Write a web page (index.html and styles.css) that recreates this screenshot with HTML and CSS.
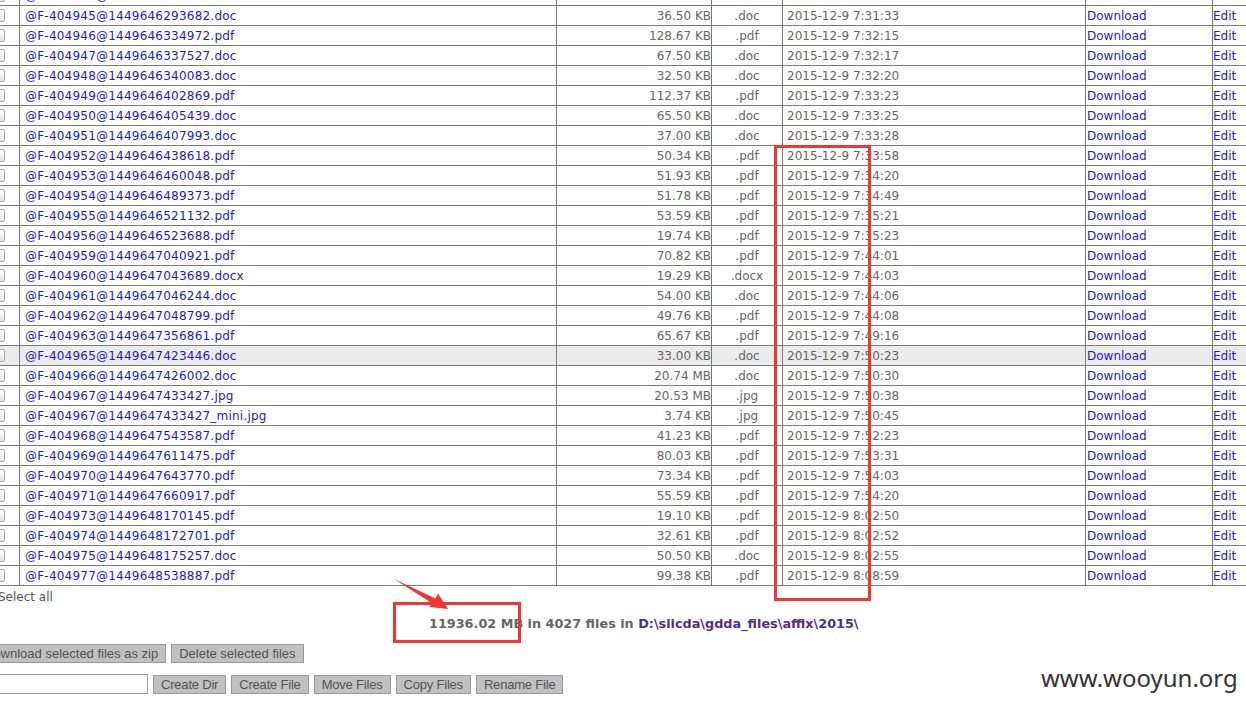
FILE: index.html
```html
<!DOCTYPE html>
<html>
<head>
<meta charset="utf-8">
<title>File list</title>
<link rel="stylesheet" href="styles.css">
</head>
<body>
<div class="page">
  <table class="files">
    <colgroup>
      <col class="c-chk"><col class="c-name"><col class="c-size"><col class="c-ext"><col class="c-date"><col class="c-dl"><col class="c-edit">
    </colgroup>
    <tbody>
      <tr><td class="chk"><span class="box"></span></td><td class="name"><a>@F-404944@1449646290427.doc</a></td><td class="size">35.00 KB</td><td class="ext">.doc</td><td class="date">2015-12-9 7:31:30</td><td class="dl"><a>Download</a></td><td class="edit"><a>Edit</a></td></tr>
      <tr><td class="chk"><span class="box"></span></td><td class="name"><a>@F-404945@1449646293682.doc</a></td><td class="size">36.50 KB</td><td class="ext">.doc</td><td class="date">2015-12-9 7:31:33</td><td class="dl"><a>Download</a></td><td class="edit"><a>Edit</a></td></tr>
      <tr><td class="chk"><span class="box"></span></td><td class="name"><a>@F-404946@1449646334972.pdf</a></td><td class="size">128.67 KB</td><td class="ext">.pdf</td><td class="date">2015-12-9 7:32:15</td><td class="dl"><a>Download</a></td><td class="edit"><a>Edit</a></td></tr>
      <tr><td class="chk"><span class="box"></span></td><td class="name"><a>@F-404947@1449646337527.doc</a></td><td class="size">67.50 KB</td><td class="ext">.doc</td><td class="date">2015-12-9 7:32:17</td><td class="dl"><a>Download</a></td><td class="edit"><a>Edit</a></td></tr>
      <tr><td class="chk"><span class="box"></span></td><td class="name"><a>@F-404948@1449646340083.doc</a></td><td class="size">32.50 KB</td><td class="ext">.doc</td><td class="date">2015-12-9 7:32:20</td><td class="dl"><a>Download</a></td><td class="edit"><a>Edit</a></td></tr>
      <tr><td class="chk"><span class="box"></span></td><td class="name"><a>@F-404949@1449646402869.pdf</a></td><td class="size">112.37 KB</td><td class="ext">.pdf</td><td class="date">2015-12-9 7:33:23</td><td class="dl"><a>Download</a></td><td class="edit"><a>Edit</a></td></tr>
      <tr><td class="chk"><span class="box"></span></td><td class="name"><a>@F-404950@1449646405439.doc</a></td><td class="size">65.50 KB</td><td class="ext">.doc</td><td class="date">2015-12-9 7:33:25</td><td class="dl"><a>Download</a></td><td class="edit"><a>Edit</a></td></tr>
      <tr><td class="chk"><span class="box"></span></td><td class="name"><a>@F-404951@1449646407993.doc</a></td><td class="size">37.00 KB</td><td class="ext">.doc</td><td class="date">2015-12-9 7:33:28</td><td class="dl"><a>Download</a></td><td class="edit"><a>Edit</a></td></tr>
      <tr><td class="chk"><span class="box"></span></td><td class="name"><a>@F-404952@1449646438618.pdf</a></td><td class="size">50.34 KB</td><td class="ext">.pdf</td><td class="date">2015-12-9 7:33:58</td><td class="dl"><a>Download</a></td><td class="edit"><a>Edit</a></td></tr>
      <tr><td class="chk"><span class="box"></span></td><td class="name"><a>@F-404953@1449646460048.pdf</a></td><td class="size">51.93 KB</td><td class="ext">.pdf</td><td class="date">2015-12-9 7:34:20</td><td class="dl"><a>Download</a></td><td class="edit"><a>Edit</a></td></tr>
      <tr><td class="chk"><span class="box"></span></td><td class="name"><a>@F-404954@1449646489373.pdf</a></td><td class="size">51.78 KB</td><td class="ext">.pdf</td><td class="date">2015-12-9 7:34:49</td><td class="dl"><a>Download</a></td><td class="edit"><a>Edit</a></td></tr>
      <tr><td class="chk"><span class="box"></span></td><td class="name"><a>@F-404955@1449646521132.pdf</a></td><td class="size">53.59 KB</td><td class="ext">.pdf</td><td class="date">2015-12-9 7:35:21</td><td class="dl"><a>Download</a></td><td class="edit"><a>Edit</a></td></tr>
      <tr><td class="chk"><span class="box"></span></td><td class="name"><a>@F-404956@1449646523688.pdf</a></td><td class="size">19.74 KB</td><td class="ext">.pdf</td><td class="date">2015-12-9 7:35:23</td><td class="dl"><a>Download</a></td><td class="edit"><a>Edit</a></td></tr>
      <tr><td class="chk"><span class="box"></span></td><td class="name"><a>@F-404959@1449647040921.pdf</a></td><td class="size">70.82 KB</td><td class="ext">.pdf</td><td class="date">2015-12-9 7:44:01</td><td class="dl"><a>Download</a></td><td class="edit"><a>Edit</a></td></tr>
      <tr><td class="chk"><span class="box"></span></td><td class="name"><a>@F-404960@1449647043689.docx</a></td><td class="size">19.29 KB</td><td class="ext">.docx</td><td class="date">2015-12-9 7:44:03</td><td class="dl"><a>Download</a></td><td class="edit"><a>Edit</a></td></tr>
      <tr><td class="chk"><span class="box"></span></td><td class="name"><a>@F-404961@1449647046244.doc</a></td><td class="size">54.00 KB</td><td class="ext">.doc</td><td class="date">2015-12-9 7:44:06</td><td class="dl"><a>Download</a></td><td class="edit"><a>Edit</a></td></tr>
      <tr><td class="chk"><span class="box"></span></td><td class="name"><a>@F-404962@1449647048799.pdf</a></td><td class="size">49.76 KB</td><td class="ext">.pdf</td><td class="date">2015-12-9 7:44:08</td><td class="dl"><a>Download</a></td><td class="edit"><a>Edit</a></td></tr>
      <tr><td class="chk"><span class="box"></span></td><td class="name"><a>@F-404963@1449647356861.pdf</a></td><td class="size">65.67 KB</td><td class="ext">.pdf</td><td class="date">2015-12-9 7:49:16</td><td class="dl"><a>Download</a></td><td class="edit"><a>Edit</a></td></tr>
      <tr class="hover"><td class="chk"><span class="box"></span></td><td class="name"><a>@F-404965@1449647423446.doc</a></td><td class="size">33.00 KB</td><td class="ext">.doc</td><td class="date">2015-12-9 7:50:23</td><td class="dl"><a>Download</a></td><td class="edit"><a>Edit</a></td></tr>
      <tr><td class="chk"><span class="box"></span></td><td class="name"><a>@F-404966@1449647426002.doc</a></td><td class="size">20.74 MB</td><td class="ext">.doc</td><td class="date">2015-12-9 7:50:30</td><td class="dl"><a>Download</a></td><td class="edit"><a>Edit</a></td></tr>
      <tr><td class="chk"><span class="box"></span></td><td class="name"><a>@F-404967@1449647433427.jpg</a></td><td class="size">20.53 MB</td><td class="ext">.jpg</td><td class="date">2015-12-9 7:50:38</td><td class="dl"><a>Download</a></td><td class="edit"><a>Edit</a></td></tr>
      <tr><td class="chk"><span class="box"></span></td><td class="name"><a>@F-404967@1449647433427_mini.jpg</a></td><td class="size">3.74 KB</td><td class="ext">.jpg</td><td class="date">2015-12-9 7:50:45</td><td class="dl"><a>Download</a></td><td class="edit"><a>Edit</a></td></tr>
      <tr><td class="chk"><span class="box"></span></td><td class="name"><a>@F-404968@1449647543587.pdf</a></td><td class="size">41.23 KB</td><td class="ext">.pdf</td><td class="date">2015-12-9 7:52:23</td><td class="dl"><a>Download</a></td><td class="edit"><a>Edit</a></td></tr>
      <tr><td class="chk"><span class="box"></span></td><td class="name"><a>@F-404969@1449647611475.pdf</a></td><td class="size">80.03 KB</td><td class="ext">.pdf</td><td class="date">2015-12-9 7:53:31</td><td class="dl"><a>Download</a></td><td class="edit"><a>Edit</a></td></tr>
      <tr><td class="chk"><span class="box"></span></td><td class="name"><a>@F-404970@1449647643770.pdf</a></td><td class="size">73.34 KB</td><td class="ext">.pdf</td><td class="date">2015-12-9 7:54:03</td><td class="dl"><a>Download</a></td><td class="edit"><a>Edit</a></td></tr>
      <tr><td class="chk"><span class="box"></span></td><td class="name"><a>@F-404971@1449647660917.pdf</a></td><td class="size">55.59 KB</td><td class="ext">.pdf</td><td class="date">2015-12-9 7:54:20</td><td class="dl"><a>Download</a></td><td class="edit"><a>Edit</a></td></tr>
      <tr><td class="chk"><span class="box"></span></td><td class="name"><a>@F-404973@1449648170145.pdf</a></td><td class="size">19.10 KB</td><td class="ext">.pdf</td><td class="date">2015-12-9 8:02:50</td><td class="dl"><a>Download</a></td><td class="edit"><a>Edit</a></td></tr>
      <tr><td class="chk"><span class="box"></span></td><td class="name"><a>@F-404974@1449648172701.pdf</a></td><td class="size">32.61 KB</td><td class="ext">.pdf</td><td class="date">2015-12-9 8:02:52</td><td class="dl"><a>Download</a></td><td class="edit"><a>Edit</a></td></tr>
      <tr><td class="chk"><span class="box"></span></td><td class="name"><a>@F-404975@1449648175257.doc</a></td><td class="size">50.50 KB</td><td class="ext">.doc</td><td class="date">2015-12-9 8:02:55</td><td class="dl"><a>Download</a></td><td class="edit"><a>Edit</a></td></tr>
      <tr><td class="chk"><span class="box"></span></td><td class="name"><a>@F-404977@1449648538887.pdf</a></td><td class="size">99.38 KB</td><td class="ext">.pdf</td><td class="date">2015-12-9 8:08:59</td><td class="dl"><a>Download</a></td><td class="edit"><a>Edit</a></td></tr>
    </tbody>
  </table>

  <div class="select-all">Select all</div>

  <div class="summary"><span class="total">11936.02 MB in 4027 files in </span><a class="path">D:\siicda\gdda_files\affix\2015\</a></div>

  <div class="actions first">
    <button class="btn">Download selected files as zip</button>
    <button class="btn">Delete selected files</button>
  </div>

  <div class="actions second">
    <input class="field" type="text">
    <button class="btn tight">Create Dir</button>
    <button class="btn tight">Create File</button>
    <button class="btn tight">Move Files</button>
    <button class="btn tight">Copy Files</button>
    <button class="btn tight">Rename File</button>
  </div>
</div>

<svg class="marks" width="1246" height="708" viewBox="0 0 1246 708">
  <rect x="775.5" y="146.5" width="94" height="453" fill="none" stroke="#f03535" stroke-width="3"/>
  <rect x="394.5" y="603.5" width="125" height="38" fill="none" stroke="#f03535" stroke-width="3"/>
  <polygon points="394,579 435.5,598.5 438,593.5 448,609 429,607 432.5,603.5" fill="#f03535"/>
</svg>

<div class="watermark">www.wooyun.org</div>
</body>
</html>
```

FILE: styles.css
```css
html, body {
  margin: 0;
  padding: 0;
  overflow: hidden;
  background: #ffffff;
}

body {
  width: 1246px;
  height: 708px;
  position: relative;
  font-family: "DejaVu Sans", Verdana, sans-serif;
  font-size: 12px;
  color: #666666;
}

.page {
  margin-top: -15px;
  margin-left: -14px;
}

.files {
  border-collapse: collapse;
  table-layout: fixed;
  width: 1300px;
}

.c-chk { width: 33px; }
.c-name { width: 537px; }
.c-size { width: 155px; }
.c-ext { width: 71px; }
.c-date { width: 303px; }
.c-dl { width: 127px; }
.c-edit { width: 74px; }

.files td {
  border: 1px solid #7a7a7a;
  height: 19px;
  padding: 0;
  line-height: 18px;
  white-space: nowrap;
  overflow: hidden;
  vertical-align: middle;
}

.files tr.hover td {
  background: #ebebeb;
}

.files a {
  color: #1a1ad6;
  text-decoration: none;
}

.chk {
  text-align: right;
  padding-right: 14px !important;
}

.box {
  display: inline-block;
  width: 11px;
  height: 11px;
  border: 1px solid #a8a8a8;
  border-radius: 2px;
  background: linear-gradient(#ffffff, #e6e6e6);
  vertical-align: middle;
  margin-top: -2px;
}

.name { padding-left: 5px !important; }
.name a { letter-spacing: 0.22px; }
.size { text-align: right; }
.ext { text-align: center; }
.date { padding-left: 4px !important; }
.dl { padding-left: 1px !important; }
.edit { padding-left: 0 !important; }

.select-all {
  margin-left: 12px;
  margin-top: 3px;
  line-height: 16px;
  color: #555555;
}

.summary {
  margin-top: 11px;
  padding-left: 443px;
  line-height: 16px;
  font-size: 12.8px;
  font-weight: bold;
  color: #666666;
}

.summary .path {
  color: #5a2a88;
  text-decoration: none;
}

.actions {
  display: flex;
  align-items: center;
  gap: 5px;
  font-family: "Liberation Sans", Arial, sans-serif;
}

.actions.first {
  margin-top: 12px;
  margin-left: -10px;
}

.actions.second {
  margin-top: 11px;
  margin-left: -10px;
}

.btn {
  font-family: "Liberation Sans", Arial, sans-serif;
  font-size: 13px;
  color: #555555;
  background: #c0c0c0;
  border: 1px solid #9a9a9a;
  height: 19px;
  padding: 0 7px;
  margin: 0;
  line-height: 17px;
}

.btn.tight {
  letter-spacing: -0.2px;
}

.field {
  width: 172px;
  border: 1px solid #a0a0a0;
  padding: 0;
  margin: 0;
  box-sizing: border-box;
  height: 20px;
}

.marks {
  position: absolute;
  left: 0;
  top: 0;
  pointer-events: none;
}

.watermark {
  position: absolute;
  left: 1041px;
  top: 662px;
  font-family: "Noto Sans", "Open Sans", sans-serif;
  font-size: 24px;
  line-height: 32px;
  color: #333333;
}
```
